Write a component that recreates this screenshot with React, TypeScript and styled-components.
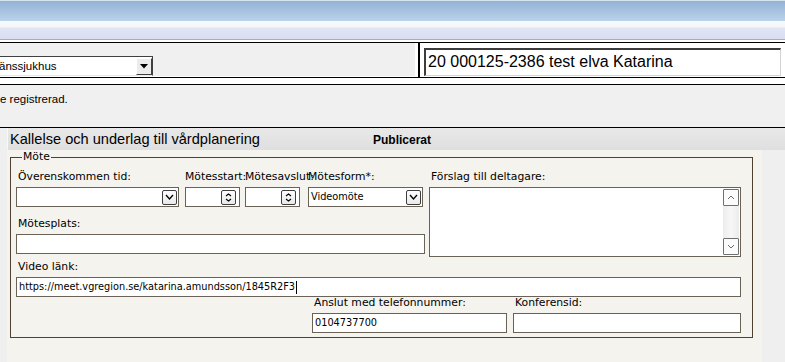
import React from "react";
import styled, { createGlobalStyle } from "styled-components";

const GlobalStyle = createGlobalStyle`
  html, body { margin: 0; padding: 0; background: #fff; }
  body { font-family: "Liberation Sans", Arial, sans-serif; }
`;

const Window = styled.div`
  width: 785px;
  height: 362px;
  overflow: hidden;
  display: flex;
  flex-direction: column;
  background: #fff;
`;

const TitleBar = styled.div`
  flex: none;
  height: 21px;
  box-sizing: border-box;
  border-top: 1px solid #d6e3f1;
  background: linear-gradient(to bottom, #93b2d5, #bad3eb);
`;

const MenuStrip = styled.div`
  flex: none;
  height: 19px;
  box-sizing: border-box;
  border-bottom: 1px solid #a6adc3;
  background: linear-gradient(
    to bottom,
    #f8fafd 0,
    #f3f6fb 6px,
    #e1e5f4 7px,
    #d8ddf0 100%
  );
`;

const PatientBar = styled.div`
  flex: none;
  margin-top: 2px;
  height: 36px;
  box-sizing: border-box;
  border-top: 1px solid #000;
  border-bottom: 1px solid #000;
  display: flex;
`;

const UnitPanel = styled.div`
  width: 415px;
  background: #f0f0f0;
  display: flex;
  align-items: flex-end;
  border-bottom: 1px solid #fff;
`;

const UnitCombo = styled.div`
  width: 155px;
  height: 20px;
  margin-left: -2px;
  box-sizing: border-box;
  display: flex;
  align-items: center;
  justify-content: space-between;
  background: #fff;
  border-top: 1px solid #404040;
  border-right: 1px solid #404040;
  border-bottom: 1px solid #e8e8e8;
  font-size: 11.5px;
  color: #000;
`;

const UnitText = styled.span`
  padding-left: 1px;
`;

const ClassicButton = styled.div`
  width: 16px;
  height: 17px;
  box-sizing: border-box;
  display: flex;
  align-items: center;
  justify-content: center;
  background: #ececec;
  border-top: 1px solid #fff;
  border-left: 1px solid #fff;
  border-right: 1px solid #404040;
  border-bottom: 1px solid #404040;
`;

const Divider = styled.div`
  width: 2px;
  margin-left: 3px;
  background: #000;
`;

const NameBox = styled.div`
  flex: 1;
  margin: 5px 4px 1px 4px;
  box-sizing: border-box;
  border-top: 2px solid #3c3c3c;
  border-left: 2px solid #3c3c3c;
  border-right: 1px solid #d4d4d4;
  border-bottom: 1px solid #d4d4d4;
  background: #fff;
  font-size: 16px;
  line-height: 24px;
  padding-left: 2px;
  color: #000;
  white-space: nowrap;
`;

const Spacer = styled.div`
  flex: none;
  height: 7px;
  box-sizing: border-box;
  border-bottom: 1px solid #000;
`;

const MessageBar = styled.div`
  flex: none;
  height: 43px;
  box-sizing: border-box;
  background: #f0f0f0;
  border-bottom: 1px solid #000;
  font-size: 11.5px;
  line-height: 14px;
  padding-top: 7px;
  color: #000;
`;

const Lower = styled.div`
  flex: 1;
  display: flex;
  min-height: 0;
`;

const LeftStrip = styled.div`
  width: 7px;
  background: #efefef;
`;

const Main = styled.div`
  flex: 1;
  display: flex;
  flex-direction: column;
`;

const Header = styled.div`
  height: 22px;
  display: grid;
  grid-template-columns: 363px auto;
  align-items: center;
  padding-left: 2px;
  background: linear-gradient(to bottom, #e8e8e8, #dfdfdf);
  border-left: 1px solid #f8f8f8;
`;

const HeaderTitle = styled.div`
  font-size: 14.6px;
  color: #000;
  white-space: nowrap;
`;

const HeaderStatus = styled.div`
  font-size: 12px;
  font-weight: bold;
  color: #000;
  padding-top: 2px;
`;

const Body = styled.div`
  flex: 1;
  display: flex;
`;

const Panel = styled.div`
  width: 755px;
  background: #f4f3ee;
  padding-left: 3px;
  box-sizing: border-box;
`;

const Gutter = styled.div`
  flex: 1;
  background: #efefef;
`;

const FieldSet = styled.fieldset`
  width: 743px;
  margin: 1px 0 0 0;
  padding: 8px 5px 4px 5px;
  box-sizing: border-box;
  border: 1px solid #4f4130;
  font-family: "DejaVu Sans", Verdana, sans-serif;
`;

const Legend = styled.legend`
  margin-left: 6px;
  padding: 0 1px;
  font-size: 10.8px;
  line-height: 12px;
  color: #000;
`;

const TopArea = styled.div`
  display: flex;
  gap: 4px;
`;

const LeftCol = styled.div`
  width: 409px;
  display: flex;
  flex-direction: column;
`;

const FieldRow = styled.div`
  display: flex;
`;

const Field = styled.div<{ $w: number; $ml?: number; $mt?: number }>`
  width: ${(p) => p.$w}px;
  margin-left: ${(p) => p.$ml ?? 0}px;
  margin-top: ${(p) => p.$mt ?? 0}px;
  flex: none;
  display: flex;
  flex-direction: column;
`;

const Label = styled.div<{ $pl?: number }>`
  height: 16px;
  line-height: 12px;
  font-size: 10.8px;
  padding-left: ${(p) => p.$pl ?? 2}px;
  color: #000;
  white-space: nowrap;
  overflow: visible;
`;

const TextBox = styled.div<{ $h?: number }>`
  height: ${(p) => p.$h ?? 20}px;
  box-sizing: border-box;
  border: 1px solid #6a6157;
  background: #fff;
  font-size: 9.75px;
  line-height: 18px;
  padding: 0 2px;
  color: #000;
  display: flex;
  align-items: center;
  white-space: nowrap;
`;

const ComboBox = styled(TextBox)`
  justify-content: space-between;
  padding-right: 1px;
`;

const SpinBox = styled(TextBox)`
  justify-content: flex-end;
  padding-right: 3px;
`;

const RoundButton = styled.div`
  width: 15px;
  height: 15px;
  box-sizing: border-box;
  border: 1px solid #3e3e3e;
  border-radius: 2px;
  background: linear-gradient(to bottom, #fdfdfd, #e9e9e9);
  display: flex;
  flex-direction: column;
  align-items: center;
  justify-content: center;
  gap: 1px;
`;

const Caret = styled.span`
  display: inline-block;
  width: 1px;
  height: 13px;
  background: #000;
  margin-left: 1px;
`;

const RightCol = styled.div`
  width: 312px;
  display: flex;
  flex-direction: column;
`;

const TextArea = styled.div`
  height: 70px;
  box-sizing: border-box;
  border: 1px solid #6a6157;
  background: #fff;
  display: flex;
  justify-content: flex-end;
  padding: 1px;
`;

const ScrollBar = styled.div`
  width: 16px;
  display: flex;
  flex-direction: column;
  justify-content: space-between;
  background: linear-gradient(to right, #ececec, #f7f7f7, #ececec);
`;

const ScrollButton = styled.div`
  width: 16px;
  height: 17px;
  box-sizing: border-box;
  border: 1px solid #707070;
  border-radius: 1px;
  background: #fbfbfb;
  display: flex;
  align-items: center;
  justify-content: center;
`;

const BottomRow = styled.div`
  display: flex;
  margin-left: 296px;
  gap: 6px;
`;

const Chevron = ({
  dir,
  w = 9,
  h = 6,
  color = "#000",
  sw = 1.3,
}: {
  dir: "up" | "down";
  w?: number;
  h?: number;
  color?: string;
  sw?: number;
}) => (
  <svg width={w} height={h} viewBox={`0 0 ${w} ${h}`} style={{ display: "block" }}>
    <path
      d={
        dir === "down"
          ? `M1 1 L${w / 2} ${h - 1} L${w - 1} 1`
          : `M1 ${h - 1} L${w / 2} 1 L${w - 1} ${h - 1}`
      }
      fill="none"
      stroke={color}
      strokeWidth={sw}
    />
  </svg>
);

const Triangle = () => (
  <svg width="8" height="5" viewBox="0 0 8 5" style={{ display: "block" }}>
    <path d="M0 0 H8 L4 4.5 Z" fill="#000" />
  </svg>
);

const Spinner = () => (
  <SpinBox>
    <RoundButton>
      <Chevron dir="up" w={7} h={4} sw={1.1} />
      <Chevron dir="down" w={7} h={4} sw={1.1} />
    </RoundButton>
  </SpinBox>
);

export default function App() {
  return (
    <>
      <GlobalStyle />
      <Window>
        <TitleBar />
        <MenuStrip />
        <PatientBar>
          <UnitPanel>
            <UnitCombo>
              <UnitText>änssjukhus</UnitText>
              <ClassicButton>
                <Triangle />
              </ClassicButton>
            </UnitCombo>
          </UnitPanel>
          <Divider />
          <NameBox>20 000125-2386 test elva Katarina</NameBox>
        </PatientBar>
        <Spacer />
        <MessageBar>e registrerad.</MessageBar>
        <Lower>
          <LeftStrip />
          <Main>
            <Header>
              <HeaderTitle>Kallelse och underlag till vårdplanering</HeaderTitle>
              <HeaderStatus>Publicerat</HeaderStatus>
            </Header>
            <Body>
              <Panel>
                <FieldSet>
                  <Legend>Möte</Legend>
                  <TopArea>
                    <LeftCol>
                      <FieldRow>
                        <Field $w={163}>
                          <Label>Överenskommen tid:</Label>
                          <ComboBox>
                            <span />
                            <RoundButton>
                              <Chevron dir="down" />
                            </RoundButton>
                          </ComboBox>
                        </Field>
                        <Field $w={55} $ml={6}>
                          <Label $pl={0}>Mötesstart:</Label>
                          <Spinner />
                        </Field>
                        <Field $w={55} $ml={5}>
                          <Label $pl={0}>Mötesavslut:</Label>
                          <Spinner />
                        </Field>
                        <Field $w={115} $ml={8}>
                          <Label $pl={0}>Mötesform*:</Label>
                          <ComboBox>
                            <span>Videomöte</span>
                            <RoundButton>
                              <Chevron dir="down" />
                            </RoundButton>
                          </ComboBox>
                        </Field>
                      </FieldRow>
                      <Field $w={409} $mt={11}>
                        <Label>Mötesplats:</Label>
                        <TextBox />
                      </Field>
                    </LeftCol>
                    <RightCol>
                      <Label>Förslag till deltagare:</Label>
                      <TextArea>
                        <ScrollBar>
                          <ScrollButton>
                            <Chevron dir="up" w={8} h={5} color="#6a6a6a" sw={1} />
                          </ScrollButton>
                          <ScrollButton>
                            <Chevron dir="down" w={8} h={5} color="#6a6a6a" sw={1} />
                          </ScrollButton>
                        </ScrollBar>
                      </TextArea>
                    </RightCol>
                  </TopArea>
                  <Field $w={725} $mt={4}>
                    <Label>Video länk:</Label>
                    <TextBox>
                      https://meet.vgregion.se/katarina.amundsson/1845R2F3
                      <Caret />
                    </TextBox>
                  </Field>
                  <BottomRow>
                    <Field $w={195}>
                      <Label>Anslut med telefonnummer:</Label>
                      <TextBox>0104737700</TextBox>
                    </Field>
                    <Field $w={228}>
                      <Label>Konferensid:</Label>
                      <TextBox />
                    </Field>
                  </BottomRow>
                </FieldSet>
              </Panel>
              <Gutter />
            </Body>
          </Main>
        </Lower>
      </Window>
    </>
  );
}
